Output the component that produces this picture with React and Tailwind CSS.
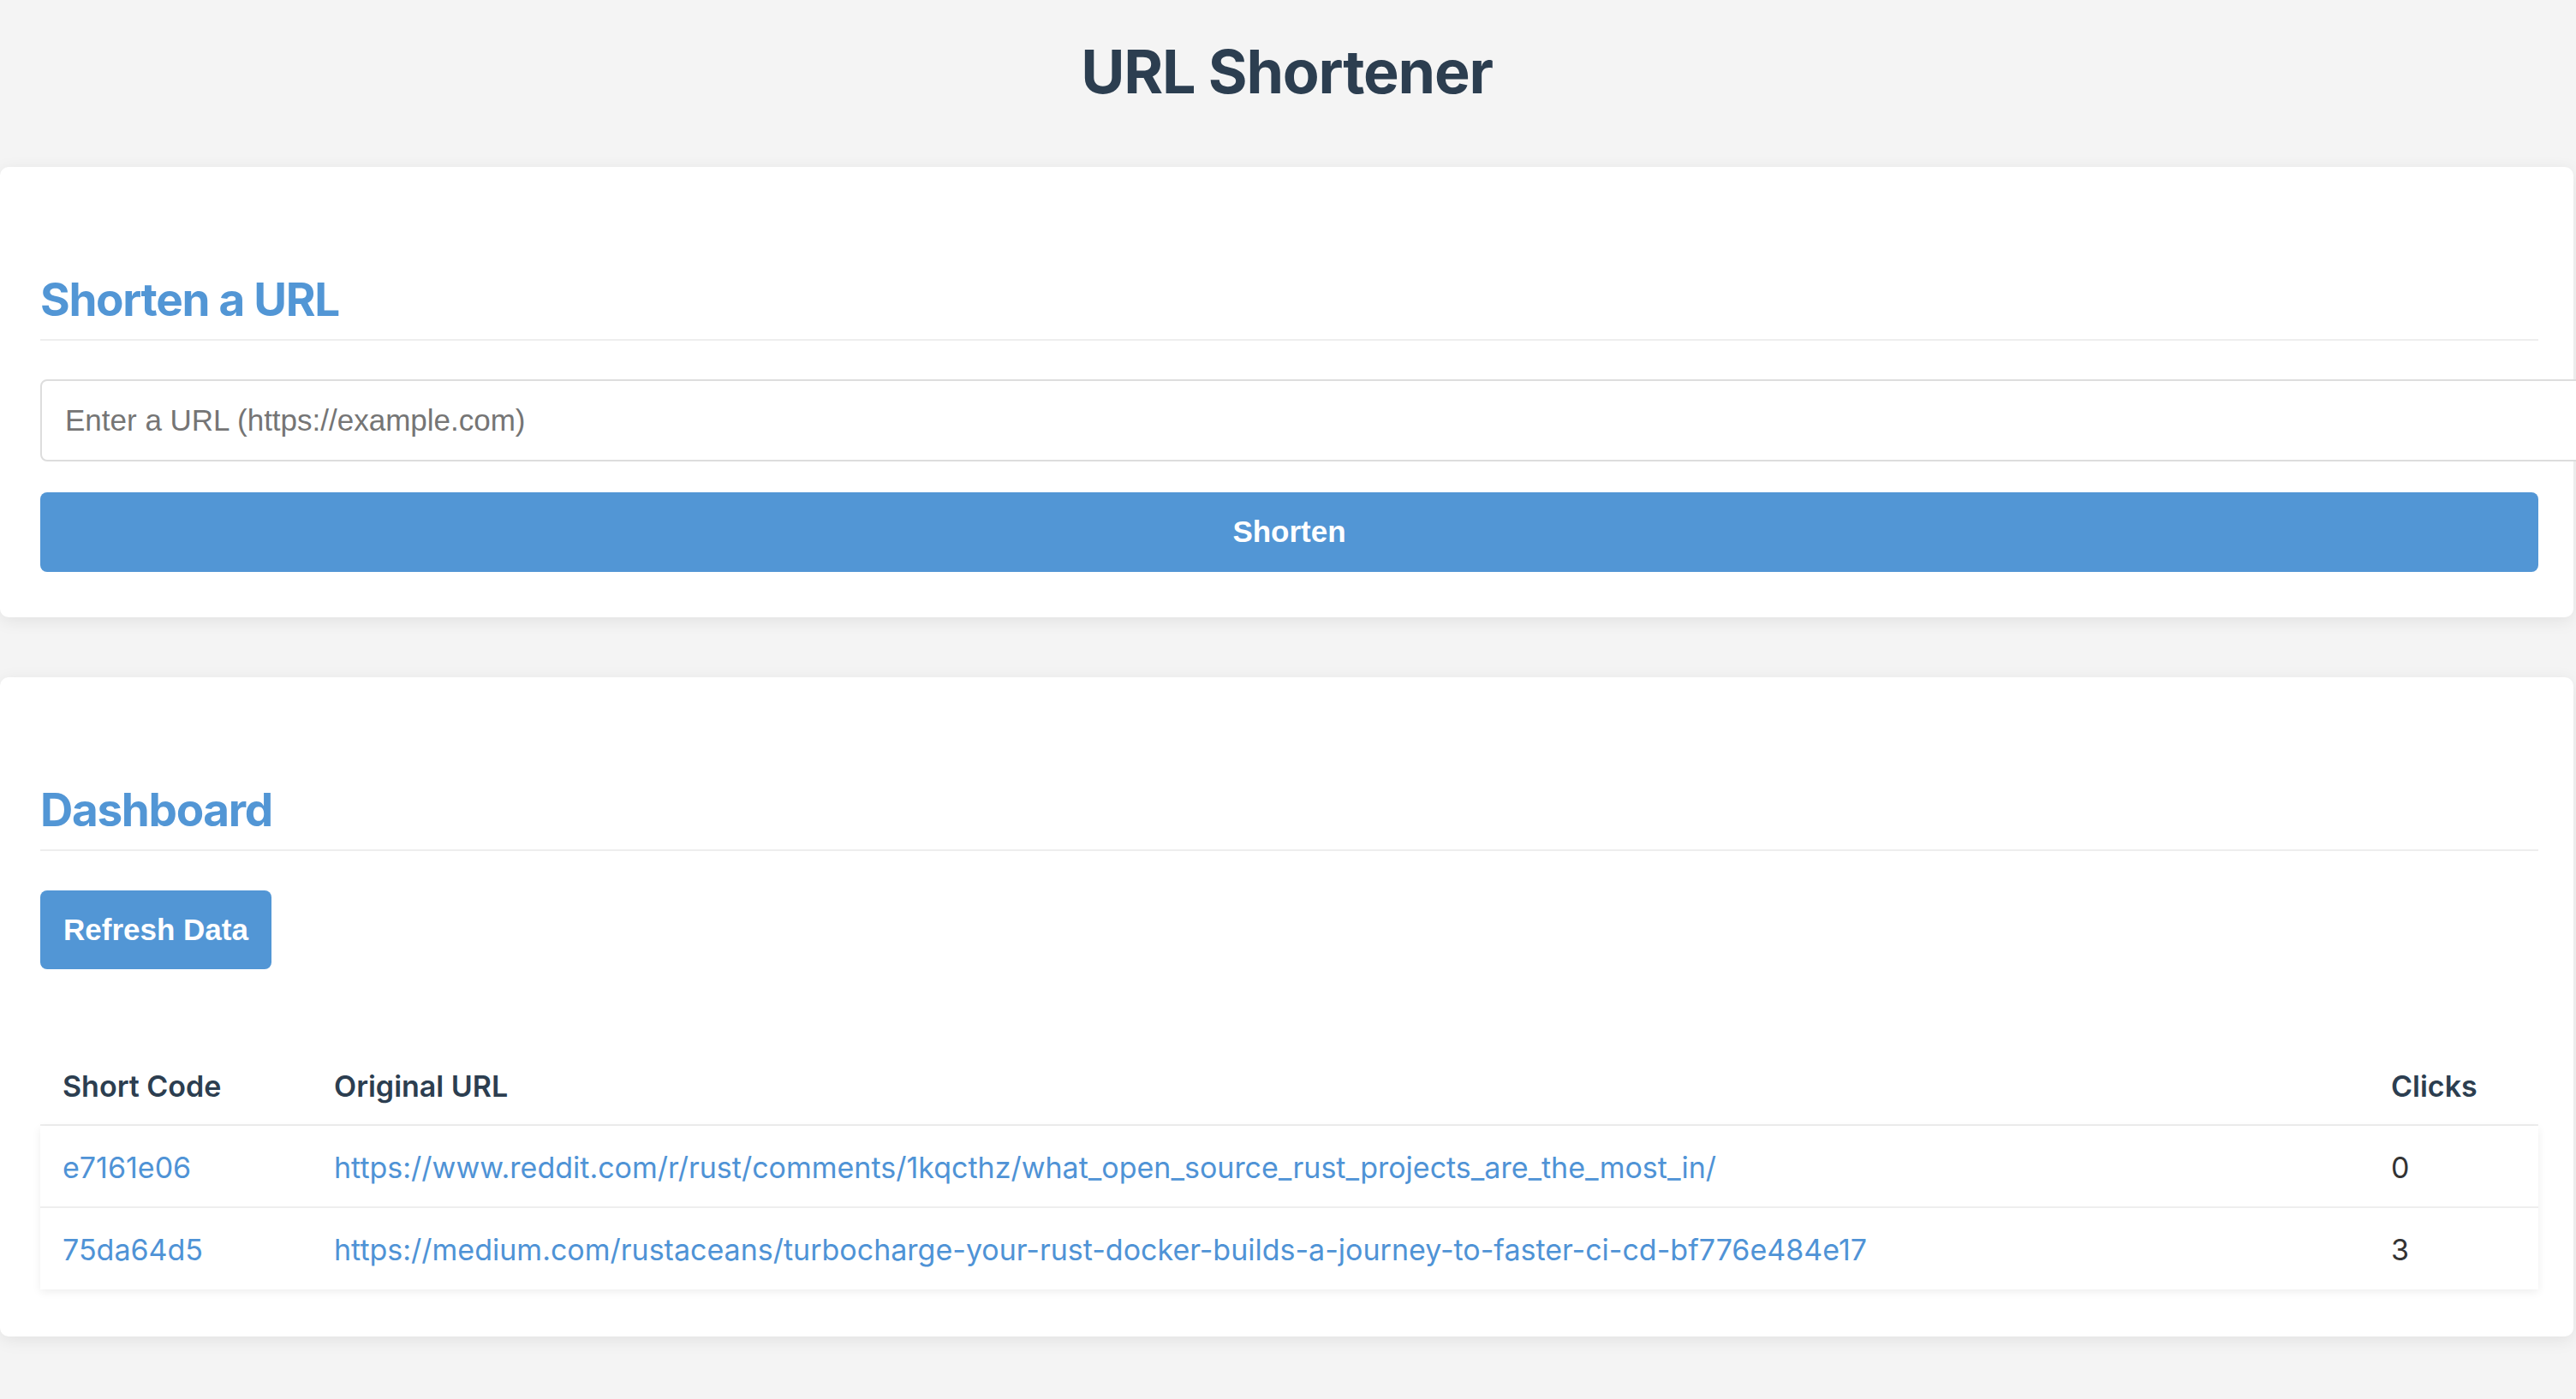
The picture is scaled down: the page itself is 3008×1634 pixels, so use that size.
import React from "react";

const rows = [
  {
    code: "e7161e06",
    url: "https://www.reddit.com/r/rust/comments/1kqcthz/what_open_source_rust_projects_are_the_most_in/",
    clicks: 0,
  },
  {
    code: "75da64d5",
    url: "https://medium.com/rustaceans/turbocharge-your-rust-docker-builds-a-journey-to-faster-ci-cd-bf776e484e17",
    clicks: 3,
  },
];

export default function App() {
  return (
    <div className="min-h-screen overflow-hidden bg-[#f4f4f4] pt-[41px] pb-[73px] pr-[3px] font-['Inter',sans-serif]">
      <h1 className="text-center text-[70px] leading-[85px] font-bold text-[#2c3e50] tracking-[-1.2px]">
        URL Shortener
      </h1>

      <section className="mt-[69px] bg-white rounded-[10px] shadow-[0_4px_20px_rgba(0,0,0,0.08)] pl-[47px] pr-[41px] pt-[122px] pb-[53px]">
        <h2 className="text-[53px] leading-[66px] font-bold text-[#5296d5] pb-[13px] border-b-2 border-[#eeeeee] tracking-[-1.3px]">
          Shorten a URL
        </h2>
        <input
          type="text"
          placeholder="Enter a URL (https://example.com)"
          className="mt-[45px] block w-[3000px] h-[96px] border-2 border-[#dddddd] rounded-[8px] pl-[27px] text-[35px] font-['Liberation_Sans',Arial,sans-serif] text-[#333] placeholder:text-[#757575] outline-none bg-white"
        />
        <button className="mt-[36px] block w-full h-[93px] rounded-[8px] bg-[#5296d5] text-white font-bold text-[35px] font-['Liberation_Sans',Arial,sans-serif]">
          Shorten
        </button>
      </section>

      <section className="mt-[70px] bg-white rounded-[10px] shadow-[0_4px_20px_rgba(0,0,0,0.08)] pl-[47px] pr-[41px] pt-[122px] pb-[55px]">
        <h2 className="text-[53px] leading-[66px] font-bold text-[#5296d5] pb-[13px] border-b-2 border-[#eeeeee] tracking-[-1.3px]">
          Dashboard
        </h2>
        <button className="mt-[46px] flex items-center h-[92px] px-[27px] rounded-[8px] bg-[#5296d5] text-white font-bold text-[35px] font-['Liberation_Sans',Arial,sans-serif]">
          Refresh Data
        </button>

        <div className="mt-[87px]">
          <div className="grid grid-cols-[317px_1fr_198px] h-[96px] pt-[5px] items-center border-b-2 border-[#eeeeee] text-[34px] font-semibold text-[#2c3e50]">
            <div className="px-[26px]">Short Code</div>
            <div className="px-[26px]">Original URL</div>
            <div className="px-[26px]">Clicks</div>
          </div>
          <div className="bg-white shadow-[0_3px_10px_rgba(0,0,0,0.07)]">
            {rows.map((r, i) => (
              <div
                key={r.code}
                className={
                  i < rows.length - 1
                    ? "grid grid-cols-[317px_1fr_198px] h-[96px] pt-[2px] items-center border-b-2 border-[#eeeeee] text-[34px]"
                    : "grid grid-cols-[317px_1fr_198px] h-[95px] pt-[2px] items-center text-[34px]"
                }
              >
                <div className="px-[26px] text-[#4f93d6]">{r.code}</div>
                <div className="px-[26px] text-[#4f93d6] whitespace-nowrap">{r.url}</div>
                <div className="px-[26px] text-[#333333]">{r.clicks}</div>
              </div>
            ))}
          </div>
        </div>
      </section>
    </div>
  );
}
